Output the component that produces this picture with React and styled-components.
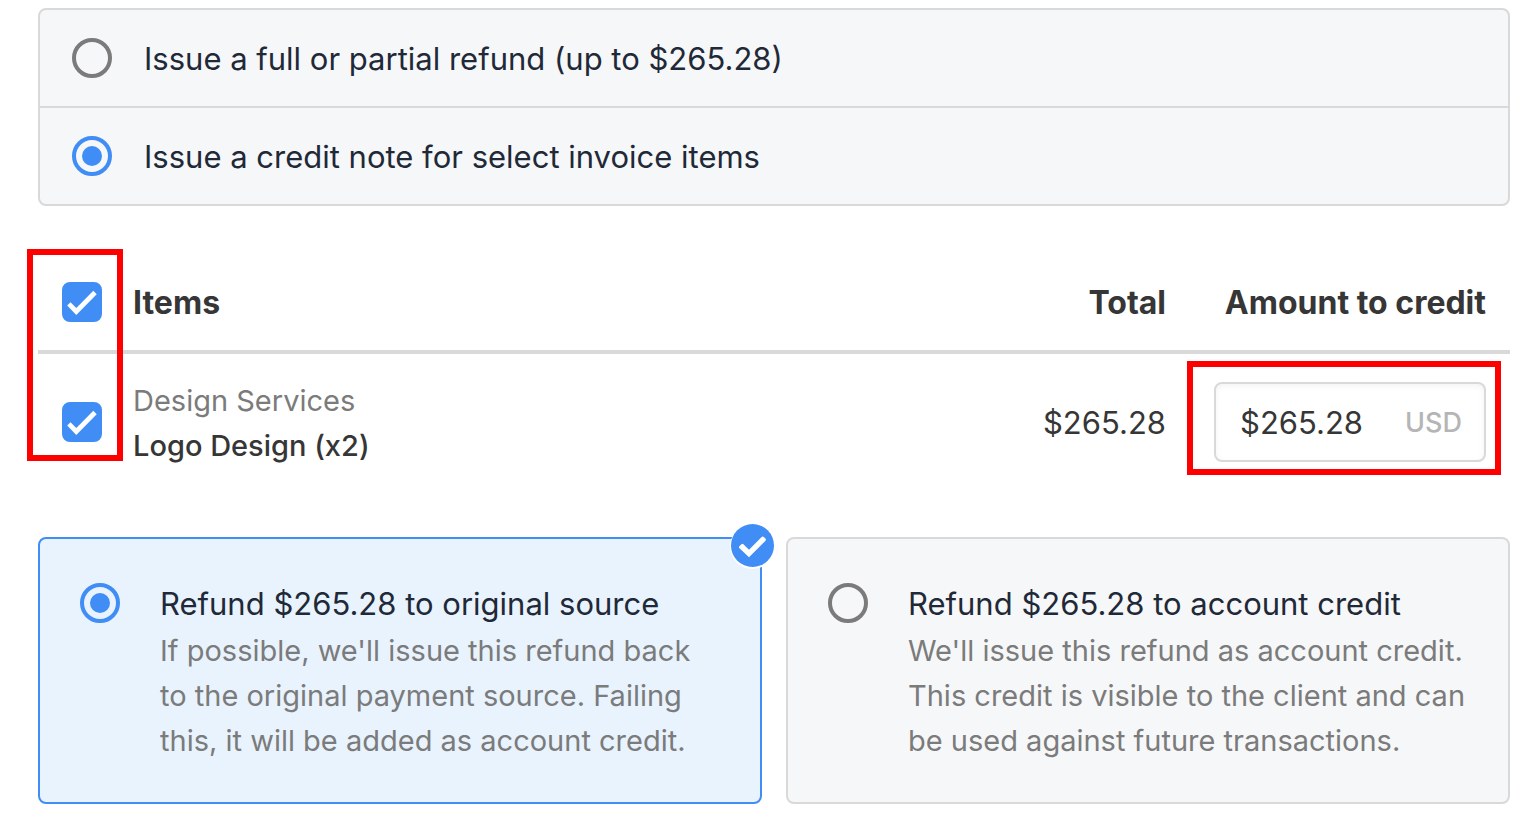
import React, { useState } from 'react';
import styled, { createGlobalStyle, css } from 'styled-components';

const blue = '#408df6';
const line = '#d9d9d9';
const ink = '#1f2937';
const dark = '#363636';
const muted = '#7b7b7b';
const panel = '#f6f7f9';

const GlobalStyle = createGlobalStyle`
  *, *::before, *::after { box-sizing: border-box; }
  body {
    margin: 0;
    background: #fff;
    color: ${dark};
    font-family: Inter, 'Liberation Sans', sans-serif;
    font-size: 31px;
    line-height: 48px;
  }
`;

const Page = styled.main`
  padding: 8px 26px 34px 38px;
`;

const OptionGroup = styled.div`
  border: 2px solid ${line};
  border-radius: 8px;
  background: ${panel};
  color: ${ink};
`;

const Option = styled.label`
  display: flex;
  align-items: center;
  gap: 32px;
  min-height: 96px;
  padding: 0 32px;
  & + & {
    min-height: 98px;
    border-top: 2px solid ${line};
  }
`;

const OptionText = styled.span`
  padding-top: 2px;
`;

const Radio = styled.input.attrs({ type: 'radio' })`
  appearance: none;
  flex: none;
  width: 40px;
  height: 40px;
  margin: 0;
  padding: 6px;
  border: 4px solid ${muted};
  border-radius: 50%;
  &:checked {
    border-color: ${blue};
    background: ${blue} content-box;
  }
`;

const ItemsSection = styled.section`
  position: relative;
  margin: 48px 0 47px;
`;

const Table = styled.table`
  width: 100%;
  border-collapse: separate;
  border-spacing: 0;
  table-layout: fixed;
`;

const cell = css`
  padding: ${(p) => (p.$text ? '2px' : '0')} 24px 0 0;
  text-align: ${(p) => (p.$end ? 'right' : 'left')};
`;

const HeadCell = styled.th`
  ${cell}
  height: 100px;
  border-bottom: 4px solid ${line};
  font-size: 32px;
  font-weight: 700;
`;

const Cell = styled.td`
  ${cell}
  height: 136px;
`;

const CheckCol = styled.col`
  width: 95px;
`;
const TotalCol = styled.col`
  width: 240px;
`;
const AmountCol = styled.col`
  width: 320px;
`;

const CheckWrap = styled.span`
  display: flex;
  position: relative;
  width: 40px;
  height: 40px;
  margin-left: 24px;
`;

const CheckInput = styled.input.attrs({ type: 'checkbox' })`
  appearance: none;
  width: 40px;
  height: 40px;
  margin: 0;
  border: 2px solid ${line};
  border-radius: 8px;
  &:checked {
    border-color: ${blue};
    background: ${blue};
  }
`;

const CheckMark = styled.svg`
  position: absolute;
  inset: 0;
  pointer-events: none;
`;

const Category = styled.div`
  color: ${muted};
  font-size: 29px;
  line-height: 45px;
`;

const ItemName = styled.div`
  font-size: 29px;
  font-weight: 500;
  line-height: 45px;
`;

const AmountField = styled.label`
  display: flex;
  align-items: center;
  justify-content: space-between;
  height: 80px;
  margin-left: 24px;
  padding: 2px 22px 0 24px;
  border: 2px solid ${line};
  border-radius: 8px;
  background: #fff;
  box-shadow: inset 0 2px 6px rgba(0, 0, 0, 0.05);
`;

const AmountInput = styled.input`
  flex: 1;
  min-width: 0;
  padding: 0;
  border: 0;
  outline: 0;
  background: transparent;
  color: inherit;
  font: inherit;
`;

const Currency = styled.span`
  color: #b5b5b5;
  font-size: 27px;
  font-weight: 500;
`;

const Highlight = styled.div`
  position: absolute;
  border: 6px solid #f00;
  pointer-events: none;
`;

const CheckHighlight = styled(Highlight)`
  top: -5px;
  left: -11px;
  width: 96px;
  height: 212px;
`;

const AmountHighlight = styled(Highlight)`
  top: 107px;
  right: 9px;
  width: 314px;
  height: 114px;
`;

const Cards = styled.div`
  display: grid;
  grid-template-columns: 1fr 1fr;
  gap: 24px;
`;

const Card = styled.label`
  position: relative;
  display: flex;
  align-items: flex-start;
  gap: 40px;
  padding: 41px 40px 39px;
  border: 2px solid ${(p) => (p.$selected ? blue : line)};
  border-radius: 8px;
  background: ${(p) => (p.$selected ? '#e8f3fe' : panel)};
  ${Radio} {
    margin-top: 3px;
  }
`;

const CardTitle = styled.div`
  color: ${ink};
`;

const CardText = styled.div`
  color: ${muted};
  font-size: 29px;
  line-height: 45px;
  white-space: pre-line;
`;

const Badge = styled.svg`
  position: absolute;
  top: -15px;
  right: -14px;
  border-radius: 50%;
  background: ${blue};
  box-shadow: 0 1px 0 1px #fff;
`;

function Checkbox({ label, checked, onChange }) {
  return (
    <CheckWrap>
      <CheckInput aria-label={label} checked={checked} onChange={onChange} />
      {checked && (
        <CheckMark width="40" height="40" viewBox="0 0 40 40" aria-hidden="true">
          <path fill="#fff" d="M5.2 23.6 8.5 20.3 14.3 26 31.3 8.8 34.7 12.2 14.3 33Z" />
        </CheckMark>
      )}
    </CheckWrap>
  );
}

const methods = [
  { id: 'full', label: 'Issue a full or partial refund (up to $265.28)' },
  { id: 'items', label: 'Issue a credit note for select invoice items' },
];

const targets = [
  {
    id: 'source',
    title: 'Refund $265.28 to original source',
    text: "If possible, we'll issue this refund back\nto the original payment source. Failing\nthis, it will be added as account credit.",
  },
  {
    id: 'credit',
    title: 'Refund $265.28 to account credit',
    text: "We'll issue this refund as account credit.\nThis credit is visible to the client and can\nbe used against future transactions.",
  },
];

export default function App() {
  const [method, setMethod] = useState('items');
  const [target, setTarget] = useState('source');
  const [picked, setPicked] = useState(true);
  const [amount, setAmount] = useState('$265.28');
  const toggle = () => setPicked(!picked);

  return (
    <Page>
      <GlobalStyle />
      <OptionGroup role="radiogroup" aria-label="Refund method">
        {methods.map((m) => (
          <Option key={m.id}>
            <Radio name="method" checked={method === m.id} onChange={() => setMethod(m.id)} />
            <OptionText>{m.label}</OptionText>
          </Option>
        ))}
      </OptionGroup>

      <ItemsSection>
        <Table>
          <colgroup>
            <CheckCol />
            <col />
            <TotalCol />
            <AmountCol />
          </colgroup>
          <thead>
            <tr>
              <HeadCell>
                <Checkbox label="Select all items" checked={picked} onChange={toggle} />
              </HeadCell>
              <HeadCell scope="col" $text>Items</HeadCell>
              <HeadCell scope="col" $text $end>Total</HeadCell>
              <HeadCell scope="col" $text $end>Amount to credit</HeadCell>
            </tr>
          </thead>
          <tbody>
            <tr>
              <Cell>
                <Checkbox label="Select Logo Design" checked={picked} onChange={toggle} />
              </Cell>
              <Cell $text>
                <Category>Design Services</Category>
                <ItemName>Logo Design (x2)</ItemName>
              </Cell>
              <Cell $text $end>$265.28</Cell>
              <Cell>
                <AmountField>
                  <AmountInput
                    aria-label="Amount to credit"
                    value={amount}
                    onChange={(e) => setAmount(e.target.value)}
                  />
                  <Currency>USD</Currency>
                </AmountField>
              </Cell>
            </tr>
          </tbody>
        </Table>
        <CheckHighlight />
        <AmountHighlight />
      </ItemsSection>

      <Cards role="radiogroup" aria-label="Refund destination">
        {targets.map((t) => (
          <Card key={t.id} $selected={target === t.id}>
            <Radio name="target" checked={target === t.id} onChange={() => setTarget(t.id)} />
            <div>
              <CardTitle>{t.title}</CardTitle>
              <CardText>{t.text}</CardText>
            </div>
            {target === t.id && (
              <Badge width="43" height="43" viewBox="0 0 43 43" aria-hidden="true">
                <path
                  fill="#fff"
                  d="M8.4 22.2 10.4 20.2Q11.4 19.4 12.4 20.3L18 25.8 30.4 13.3Q31.8 12 33 13.2L34.4 14.6Q35.4 15.8 34.3 17L18 33.2 8.5 24.2Q7.4 23.2 8.4 22.2Z"
                />
              </Badge>
            )}
          </Card>
        ))}
      </Cards>
    </Page>
  );
}
